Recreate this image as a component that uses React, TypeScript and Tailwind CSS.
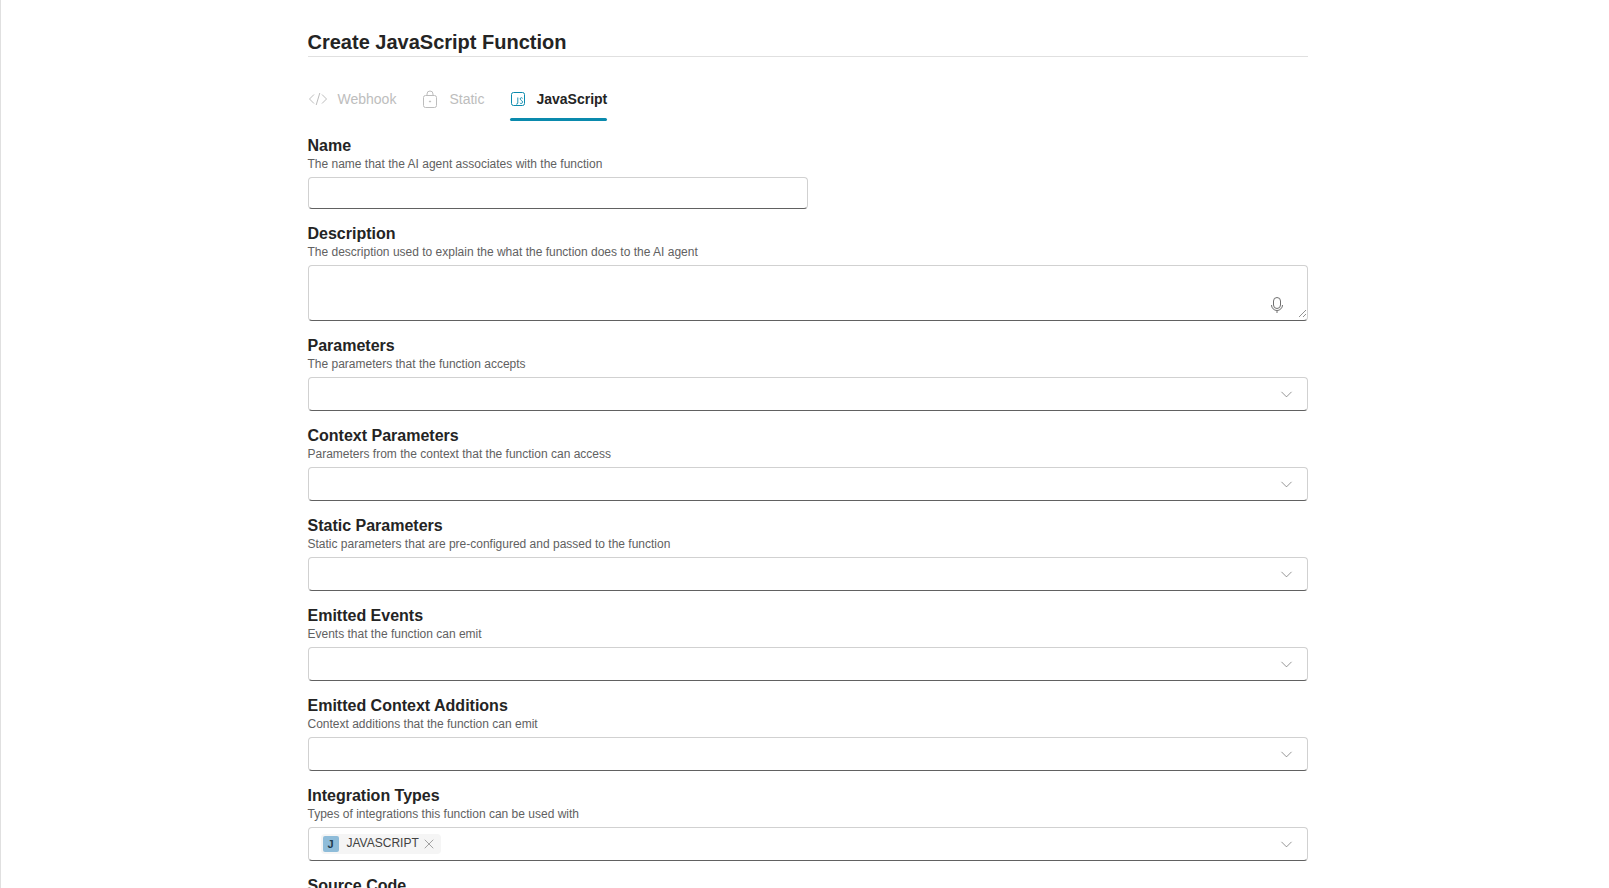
import React from "react";
import { ChevronDown, X } from "lucide-react";

function Label({ title, desc }: { title: string; desc?: string }) {
  return (
    <div>
      <div className="text-[16px] leading-[18px] font-bold text-[#242424]">{title}</div>
      {desc && <div className="text-[12px] leading-[18px] text-[#616161]">{desc}</div>}
    </div>
  );
}

function SelectField({ title, desc, children }: { title: string; desc: string; children?: React.ReactNode }) {
  return (
    <div className="mb-[16px]">
      <Label title={title} desc={desc} />
      <div className="mt-[4px] h-[34px] flex items-center justify-between bg-white border border-[#d1d1d1] border-b-[#616161] rounded-[4px] pl-[12px] pr-[11px]">
        <div className="flex items-center">{children}</div>
        <ChevronDown className="w-[19px] h-[19px] mt-[1px] text-[#616161]" strokeWidth={0.85} />
      </div>
    </div>
  );
}

export default function App() {
  return (
    <div className="h-[888px] overflow-hidden bg-white border-l border-[#e0e0e0] font-['Liberation_Sans',Arial,sans-serif]">
      <div className="w-[1000px] ml-[306.5px]">
        <div className="pt-[30px] pb-[1px] border-b border-[#e0e0e0] text-[20px] leading-[25px] font-bold text-[#242424]">
          Create JavaScript Function
        </div>

        <div className="flex h-[64px] pt-[32px] text-[14px]">
          <div className="flex items-start gap-[10px] mr-[24px] text-[#bdbdbd]">
            <svg width="20" height="20" viewBox="0 0 20 20" fill="none" stroke="#bdbdbd" strokeWidth="1">
              <path d="M6 5.5 1.5 10 6 14.5M14 5.5 18.5 10 14 14.5M11.8 4 8.2 16" />
            </svg>
            <span className="leading-[20px]">Webhook</span>
          </div>
          <div className="flex items-start gap-[9px] mr-[26px] text-[#bdbdbd]">
            <svg width="20" height="20" viewBox="0 0 20 20" fill="none" stroke="#bdbdbd" strokeWidth="1">
              <rect x="3.5" y="6.5" width="13" height="12" rx="2" />
              <path d="M7 6.5V5a3 3 0 0 1 6 0v1.5" />
              <circle cx="10" cy="12.5" r="0.6" fill="#bdbdbd" />
            </svg>
            <span className="leading-[20px]">Static</span>
          </div>
          <div className="relative flex items-start gap-[10px] text-[#242424] font-bold h-[32px]">
            <svg width="16" height="20" viewBox="0 0 16 20" fill="none" stroke="#0a8aad" strokeWidth="1">
              <rect x="1.5" y="3.5" width="13" height="13" rx="2" />
              <path d="M7.8 8.5v5.5q0 1.2-1.6 1.2M12.6 9.4q-.5-.7-1.2-.7-1.2 0-1.2 1.2 0 .9 1.1 1.4 1.2.5 1.2 1.8 0 1.4-1.3 1.4-.8 0-1.3-.6" strokeWidth="0.9" />
            </svg>
            <span className="leading-[20px]">JavaScript</span>
            <div className="absolute left-0 right-0 bottom-0 h-[3px] rounded-[2px] bg-[#0a8aad]" />
          </div>
        </div>

        <div className="mt-[16px] mb-[16px]">
          <Label title="Name" desc="The name that the AI agent associates with the function" />
          <div className="mt-[4px] w-[500px] h-[32px] bg-white border border-[#d1d1d1] border-b-[#616161] rounded-[4px]" />
        </div>

        <div className="mb-[16px]">
          <Label title="Description" desc="The description used to explain the what the function does to the AI agent" />
          <div className="relative mt-[4px] h-[56px] bg-white border border-[#d1d1d1] border-b-[#616161] rounded-[4px]">
            <svg className="absolute right-[24px] bottom-[7px]" width="12" height="16" viewBox="0 0 12 16" fill="none" stroke="#707070" strokeWidth="1">
              <rect x="2.5" y="0.5" width="7" height="11" rx="3.5" />
              <path d="M0.5 8a5.5 5.5 0 0 0 11 0M6 13.5V16" />
            </svg>
            <svg className="absolute right-[0px] bottom-[2px]" width="9" height="9" viewBox="0 0 9 9" fill="none" stroke="#767676" strokeWidth="0.8">
              <path d="M1 8 8 1M5 8 8 5" />
            </svg>
          </div>
        </div>

        <SelectField title="Parameters" desc="The parameters that the function accepts" />
        <SelectField title="Context Parameters" desc="Parameters from the context that the function can access" />
        <SelectField title="Static Parameters" desc="Static parameters that are pre-configured and passed to the function" />
        <SelectField title="Emitted Events" desc="Events that the function can emit" />
        <SelectField title="Emitted Context Additions" desc="Context additions that the function can emit" />
        <SelectField title="Integration Types" desc="Types of integrations this function can be used with">
          <div className="flex items-center h-[20px] bg-[#f5f5f5] rounded-[4px] pl-[2px] pr-[4px] text-[12px] text-[#424242]">
            <span className="w-[16px] h-[16px] rounded-[2px] bg-[#8ebcd9] text-[#1f3a4d] text-[11px] font-bold flex items-center justify-center">J</span>
            <span className="ml-[8px] mb-[3px] leading-[14px]">JAVASCRIPT</span>
            <X className="ml-[2px] w-[16px] h-[16px] text-[#616161]" strokeWidth={0.85} />
          </div>
        </SelectField>
        <Label title="Source Code" />
      </div>
    </div>
  );
}
